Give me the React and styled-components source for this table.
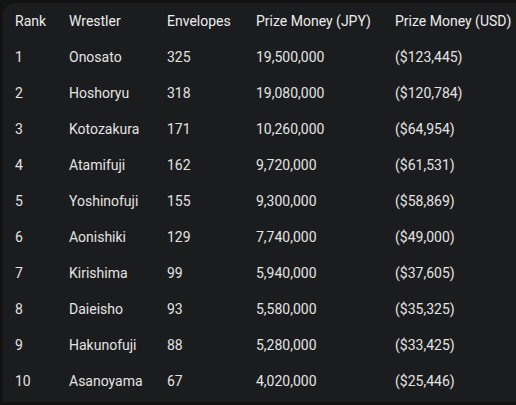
import React from "react";
import styled, { createGlobalStyle } from "styled-components";

const Global = createGlobalStyle`
  html, body { margin: 0; padding: 0; background: #131314; }
  body { width: 516px; height: 405px; overflow: hidden; }
`;

const Page = styled.div`
  padding: 3px 0 0 3px;
  height: 402px;
  box-sizing: border-box;
`;

const Card = styled.div`
  background: #1b1c1d;
  border-radius: 12px 0 0 0;
  height: 100%;
  font-family: Roboto, "Liberation Sans", sans-serif;
  font-size: 14px;
  color: #e3e3e3;
`;

const Table = styled.table`
  border-collapse: collapse;
  table-layout: fixed;
  width: 513px;
`;

const Cell = styled.td`
  height: 36px;
  padding: 0 0 0 12px;
  white-space: nowrap;
  text-align: left;
  vertical-align: middle;
  font-weight: 400;
`;

const Head = styled(Cell).attrs({ as: "th" })`
  color: #ececec;
`;

const widths = [54, 98, 89, 139, 133];

const rows = [
  ["1", "Onosato", "325", "19,500,000", "($123,445)"],
  ["2", "Hoshoryu", "318", "19,080,000", "($120,784)"],
  ["3", "Kotozakura", "171", "10,260,000", "($64,954)"],
  ["4", "Atamifuji", "162", "9,720,000", "($61,531)"],
  ["5", "Yoshinofuji", "155", "9,300,000", "($58,869)"],
  ["6", "Aonishiki", "129", "7,740,000", "($49,000)"],
  ["7", "Kirishima", "99", "5,940,000", "($37,605)"],
  ["8", "Daieisho", "93", "5,580,000", "($35,325)"],
  ["9", "Hakunofuji", "88", "5,280,000", "($33,425)"],
  ["10", "Asanoyama", "67", "4,020,000", "($25,446)"],
];

export default function App() {
  return (
    <>
      <Global />
      <Page>
        <Card>
          <Table>
            <colgroup>
              {widths.map((w, i) => (
                <col key={i} style={{ width: w }} />
              ))}
            </colgroup>
            <thead>
              <tr>
                {["Rank", "Wrestler", "Envelopes", "Prize Money (JPY)", "Prize Money (USD)"].map((h) => (
                  <Head key={h}>{h}</Head>
                ))}
              </tr>
            </thead>
            <tbody>
              {rows.map((r) => (
                <tr key={r[0]}>
                  {r.map((c, i) => (
                    <Cell key={i}>{c}</Cell>
                  ))}
                </tr>
              ))}
            </tbody>
          </Table>
        </Card>
      </Page>
    </>
  );
}
